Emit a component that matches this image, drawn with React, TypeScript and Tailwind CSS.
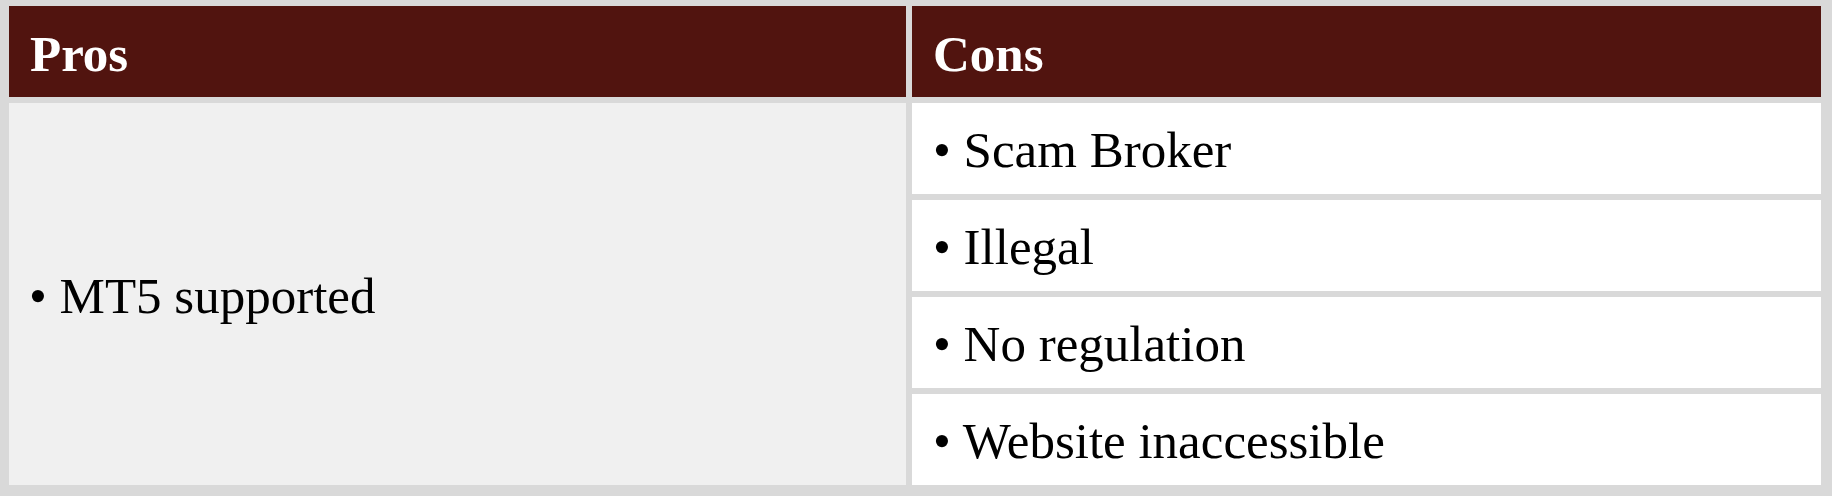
import React from "react";

const cons = ["Scam Broker", "Illegal", "No regulation", "Website inaccessible"];

export default function App() {
  return (
    <div className="w-[1832px] h-[496px] bg-[#d9d9d9] pt-[6px] pl-[9px] font-['Liberation_Serif',serif]">
      <div className="grid grid-cols-[897px_909px] grid-rows-[91px_91px_91px_91px_91px] gap-[6px]">
        <div className="bg-[#51140f] text-white font-bold text-[51px] leading-none flex items-center pl-[21px] pt-[5px]">
          Pros
        </div>
        <div className="bg-[#51140f] text-white font-bold text-[51px] leading-none flex items-center pl-[21px] pt-[5px]">
          Cons
        </div>
        <div className="row-span-4 bg-[#f0f0f0] text-black text-[51px] leading-none flex items-center pl-[20px] pt-[4px]">
          • MT5 supported
        </div>
        {cons.map((c) => (
          <div
            key={c}
            className="bg-white text-black text-[51px] leading-none flex items-center pl-[21px] pt-[4px]"
          >
            • {c}
          </div>
        ))}
      </div>
    </div>
  );
}
